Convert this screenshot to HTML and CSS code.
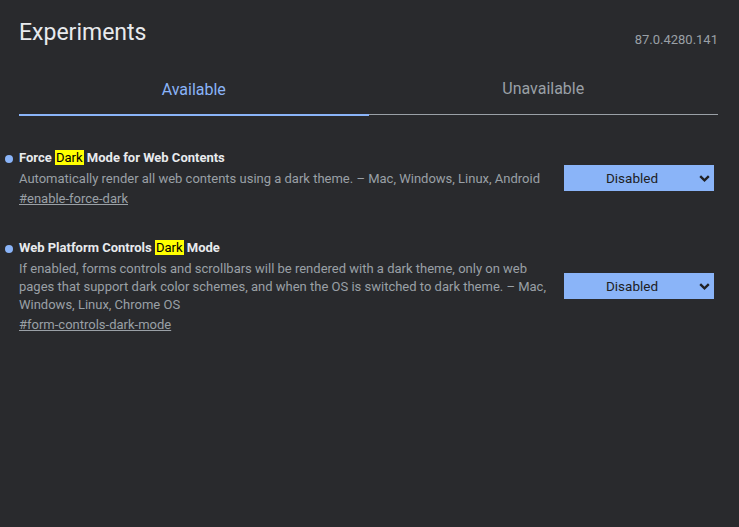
FILE: index.html
```html
<!DOCTYPE html>
<html lang="en">
<head>
<meta charset="utf-8">
<title>Experiments</title>
<link rel="stylesheet" href="styles.css">
</head>
<body>
<div class="page">
  <header class="header">
    <h1 class="title">Experiments</h1>
    <div class="version">87.0.4280.141</div>
  </header>
  <nav class="tabs">
    <div class="tab tab-active">Available</div>
    <div class="tab">Unavailable</div>
  </nav>
  <main class="list">
    <section class="experiment">
      <div class="exp-text">
        <h3 class="exp-name">Force <mark class="hl">Dark</mark> Mode for Web Contents</h3>
        <p class="exp-desc">Automatically render all web contents using a dark theme. – Mac, Windows, Linux, Android</p>
        <a class="exp-link" href="#enable-force-dark">#enable-force-dark</a>
      </div>
      <div class="select">
        <span class="select-label">Disabled</span>
        <svg class="chevron" width="11" height="7" viewBox="0 0 11 7"><path d="M1.2 1.2 L5.5 5.3 L9.8 1.2" fill="none" stroke="#202124" stroke-width="2.4"/></svg>
      </div>
    </section>
    <section class="experiment">
      <div class="exp-text">
        <h3 class="exp-name">Web Platform Controls <mark class="hl">Dark</mark> Mode</h3>
        <p class="exp-desc">If enabled, forms controls and scrollbars will be rendered with a dark theme, only on web pages that support dark color schemes, and when the OS is switched to dark theme. – Mac, Windows, Linux, Chrome OS</p>
        <a class="exp-link" href="#form-controls-dark-mode">#form-controls-dark-mode</a>
      </div>
      <div class="select">
        <span class="select-label">Disabled</span>
        <svg class="chevron" width="11" height="7" viewBox="0 0 11 7"><path d="M1.2 1.2 L5.5 5.3 L9.8 1.2" fill="none" stroke="#202124" stroke-width="2.4"/></svg>
      </div>
    </section>
  </main>
</div>
</body>
</html>
```
FILE: styles.css
```css
html, body {
  margin: 0;
  padding: 0;
  background: #292a2d;
  height: 100%;
}
body {
  font-family: Roboto, "Liberation Sans", sans-serif;
  color: #e8eaed;
}
.page {
  padding: 0 21px 0 19px;
}
.header {
  display: flex;
  justify-content: space-between;
  align-items: flex-start;
  padding-top: 17px;
}
.title {
  margin: 0;
  font-size: 23px;
  line-height: 32px;
  font-weight: 400;
  color: #e8eaed;
}
.version {
  padding-top: 13px;
  font-size: 13px;
  line-height: 20px;
  color: #9aa0a6;
}
.tabs {
  display: flex;
  align-items: flex-end;
}
.tab {
  flex: 1;
  text-align: center;
  font-size: 16px;
  line-height: 20px;
  padding: 29px 0 15px;
  color: #9aa0a6;
  border-bottom: 1px solid #9aa0a6;
}
.tab-active {
  color: #8ab4f8;
  padding-bottom: 14px;
  border-bottom: 2px solid #8ab4f8;
  margin-bottom: -1px;
  position: relative;
}
.list {
  padding-top: 33px;
  display: flex;
  flex-direction: column;
  gap: 30px;
}
.experiment {
  display: flex;
  align-items: center;
  justify-content: space-between;
  gap: 10px;
}
.exp-text {
  flex: 0 0 532px;
}
.exp-name {
  position: relative;
  margin: 0;
  font-size: 13px;
  line-height: 20px;
  font-weight: 700;
  color: #e8eaed;
}
.exp-name::before {
  content: "";
  position: absolute;
  left: -14px;
  top: 7px;
  width: 8px;
  height: 8px;
  border-radius: 50%;
  background: #8ab4f8;
}
.hl {
  background: #ffff00;
  color: #000;
  font-weight: 400;
  padding: 0 1px;
}
.exp-desc {
  margin: 2px 0 0;
  font-size: 13px;
  line-height: 18px;
  color: #9aa0a6;
}
.exp-link {
  display: inline-block;
  margin-top: 2px;
  font-size: 13px;
  line-height: 18px;
  color: #9aa0a6;
  text-decoration: underline;
}
.select {
  flex: none;
  width: 150px;
  height: 26px;
  margin-right: 4px;
  background: #8ab4f8;
  color: #202124;
  font-size: 13.5px;
  display: flex;
  align-items: center;
  justify-content: center;
  position: relative;
}
.select-label {
  margin-left: -14px;
}
.chevron {
  position: absolute;
  right: 4px;
  top: 10px;
}
```
